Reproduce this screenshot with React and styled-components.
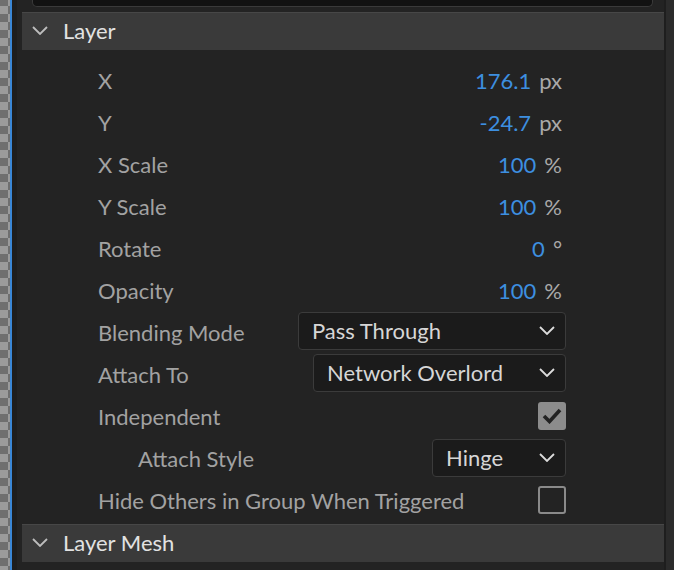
import React from 'react';
import styled, { createGlobalStyle } from 'styled-components';

const GlobalStyle = createGlobalStyle`
  html, body {
    margin: 0;
    padding: 0;
    background: #1e1e1e;
  }
  body {
    font-family: Lato, "Open Sans", sans-serif;
  }
`

const Screen = styled.div`
  display: flex;
  width: 674px;
  height: 570px;
  overflow: hidden;
  background: #1e1e1e;
`
const Checker = styled.svg`
  display: block;
  width: 10px;
  height: 570px;
  flex-shrink: 0;
`
const SelectionEdge = styled.div`
  width: 2px;
  flex-shrink: 0;
  background: #3a87d6;
`
const Gutter = styled.div`
  width: 5px;
  flex-shrink: 0;
  background: #1e1e1e;
`
const Panel = styled.div`
  flex: 1;
  display: flex;
  flex-direction: column;
  background: #232323;
  min-width: 0;
`
const Scrollbar = styled.div`
  width: 8px;
  flex-shrink: 0;
  margin-left: 2px;
  background: #2b2b2b;
`
const PrevField = styled.div`
  height: 7px;
  margin: 0 11px 0 15px;
  background: #121212;
  border: 1px solid #3a3a3a;
  border-top: none;
  border-radius: 0 0 5px 5px;
  box-sizing: border-box;
`
const SectionHeader = styled.div`
  display: flex;
  align-items: center;
  gap: 15px;
  height: 38px;
  margin: ${props => props.top}px 0 0 5px;
  padding: 0 0 3px 10px;
  background: #3a3a3a;
  border-top: 1px solid #474747;
  color: #e2e2e2;
  font-size: 22px;
  box-sizing: border-box;
`
const Rows = styled.div`
  display: flex;
  flex-direction: column;
  padding-top: 9px;
`
const Row = styled.div`
  display: flex;
  align-items: center;
  justify-content: space-between;
  height: 42px;
  padding: 0 98px 0 ${props => props.indent ? 121 : 81}px;
  box-sizing: border-box;
`
const Label = styled.span`
  color: #a2a2a2;
  font-size: 22px;
  white-space: nowrap;
`
const ValueBox = styled.span`
  display: flex;
  align-items: baseline;
  gap: 8px;
  padding-right: 4px;
  font-size: 22px;
`
const Number = styled.span`
  color: #3d8fe0;
`
const Unit = styled.span`
  color: #a9a9a9;
`
const Dropdown = styled.div`
  display: flex;
  align-items: center;
  justify-content: space-between;
  width: ${props => props.width}px;
  height: 38px;
  padding: 0 10px 2px 13px;
  margin-top: ${props => props.shift}px;
  background: #1b1b1b;
  border: 1px solid #3b3b3b;
  border-radius: 4px;
  box-sizing: border-box;
  color: #d6d6d6;
  font-size: 22px;
`
const Checkbox = styled.div`
  display: flex;
  align-items: center;
  justify-content: center;
  width: 28px;
  height: 28px;
  border-radius: 3px;
  box-sizing: border-box;
  background: ${props => props.checked ? '#8c8c8c' : 'transparent'};
  border: ${props => props.checked ? 'none' : '2px solid #8a8a8a'};
`

const Chevron = ({ color = '#bdbdbd' }) => (
  <svg width="16" height="9" viewBox="0 0 16 9">
    <path d="M1 1 L8 8 L15 1" fill="none" stroke={color} strokeWidth="1.8" />
  </svg>
)

const Check = () => (
  <svg width="20" height="16" viewBox="0 0 20 16">
    <path d="M2 8 L7.5 13.5 L18 2" fill="none" stroke="#222" strokeWidth="3.6" />
  </svg>
)

// transparency grid shown at the canvas edge
const TransparencyGrid = () => (
  <Checker viewBox="0 0 10 570">
    <defs>
      <pattern id="checks" width="16" height="16" patternUnits="userSpaceOnUse" x="0" y="-2">
        <rect width="16" height="16" fill="#9b9b9b" />
        <rect width="8" height="8" fill="#6f6f6f" />
        <rect x="8" y="8" width="8" height="8" fill="#6f6f6f" />
      </pattern>
    </defs>
    <rect width="10" height="570" fill="url(#checks)" />
  </Checker>
)

const numeric = [
  { label: 'X', value: '176.1', unit: 'px' },
  { label: 'Y', value: '-24.7', unit: 'px' },
  { label: 'X Scale', value: '100', unit: '%' },
  { label: 'Y Scale', value: '100', unit: '%' },
  { label: 'Rotate', value: '0', unit: '°' },
  { label: 'Opacity', value: '100', unit: '%' },
]

export default function App() {
  return (
    <Screen>
      <GlobalStyle />
      <TransparencyGrid />
      <SelectionEdge />
      <Gutter />
      <Panel>
        <PrevField />
        <SectionHeader top={5}>
          <Chevron />
          <span>Layer</span>
        </SectionHeader>
        <Rows>
          {numeric.map(item => (
            <Row key={item.label}>
              <Label>{item.label}</Label>
              <ValueBox>
                <Number>{item.value}</Number>
                <Unit>{item.unit}</Unit>
              </ValueBox>
            </Row>
          ))}
          <Row>
            <Label>Blending Mode</Label>
            <Dropdown width={268} shift={-2}>
              <span>Pass Through</span>
              <Chevron color="#dcdcdc" />
            </Dropdown>
          </Row>
          <Row>
            <Label>Attach To</Label>
            <Dropdown width={253} shift={-2}>
              <span>Network Overlord</span>
              <Chevron color="#dcdcdc" />
            </Dropdown>
          </Row>
          <Row>
            <Label>Independent</Label>
            <Checkbox checked>
              <Check />
            </Checkbox>
          </Row>
          <Row indent>
            <Label>Attach Style</Label>
            <Dropdown width={134} shift={0}>
              <span>Hinge</span>
              <Chevron color="#dcdcdc" />
            </Dropdown>
          </Row>
          <Row>
            <Label>Hide Others in Group When Triggered</Label>
            <Checkbox />
          </Row>
        </Rows>
        <SectionHeader top={3}>
          <Chevron />
          <span>Layer Mesh</span>
        </SectionHeader>
      </Panel>
      <Scrollbar />
    </Screen>
  );
}
